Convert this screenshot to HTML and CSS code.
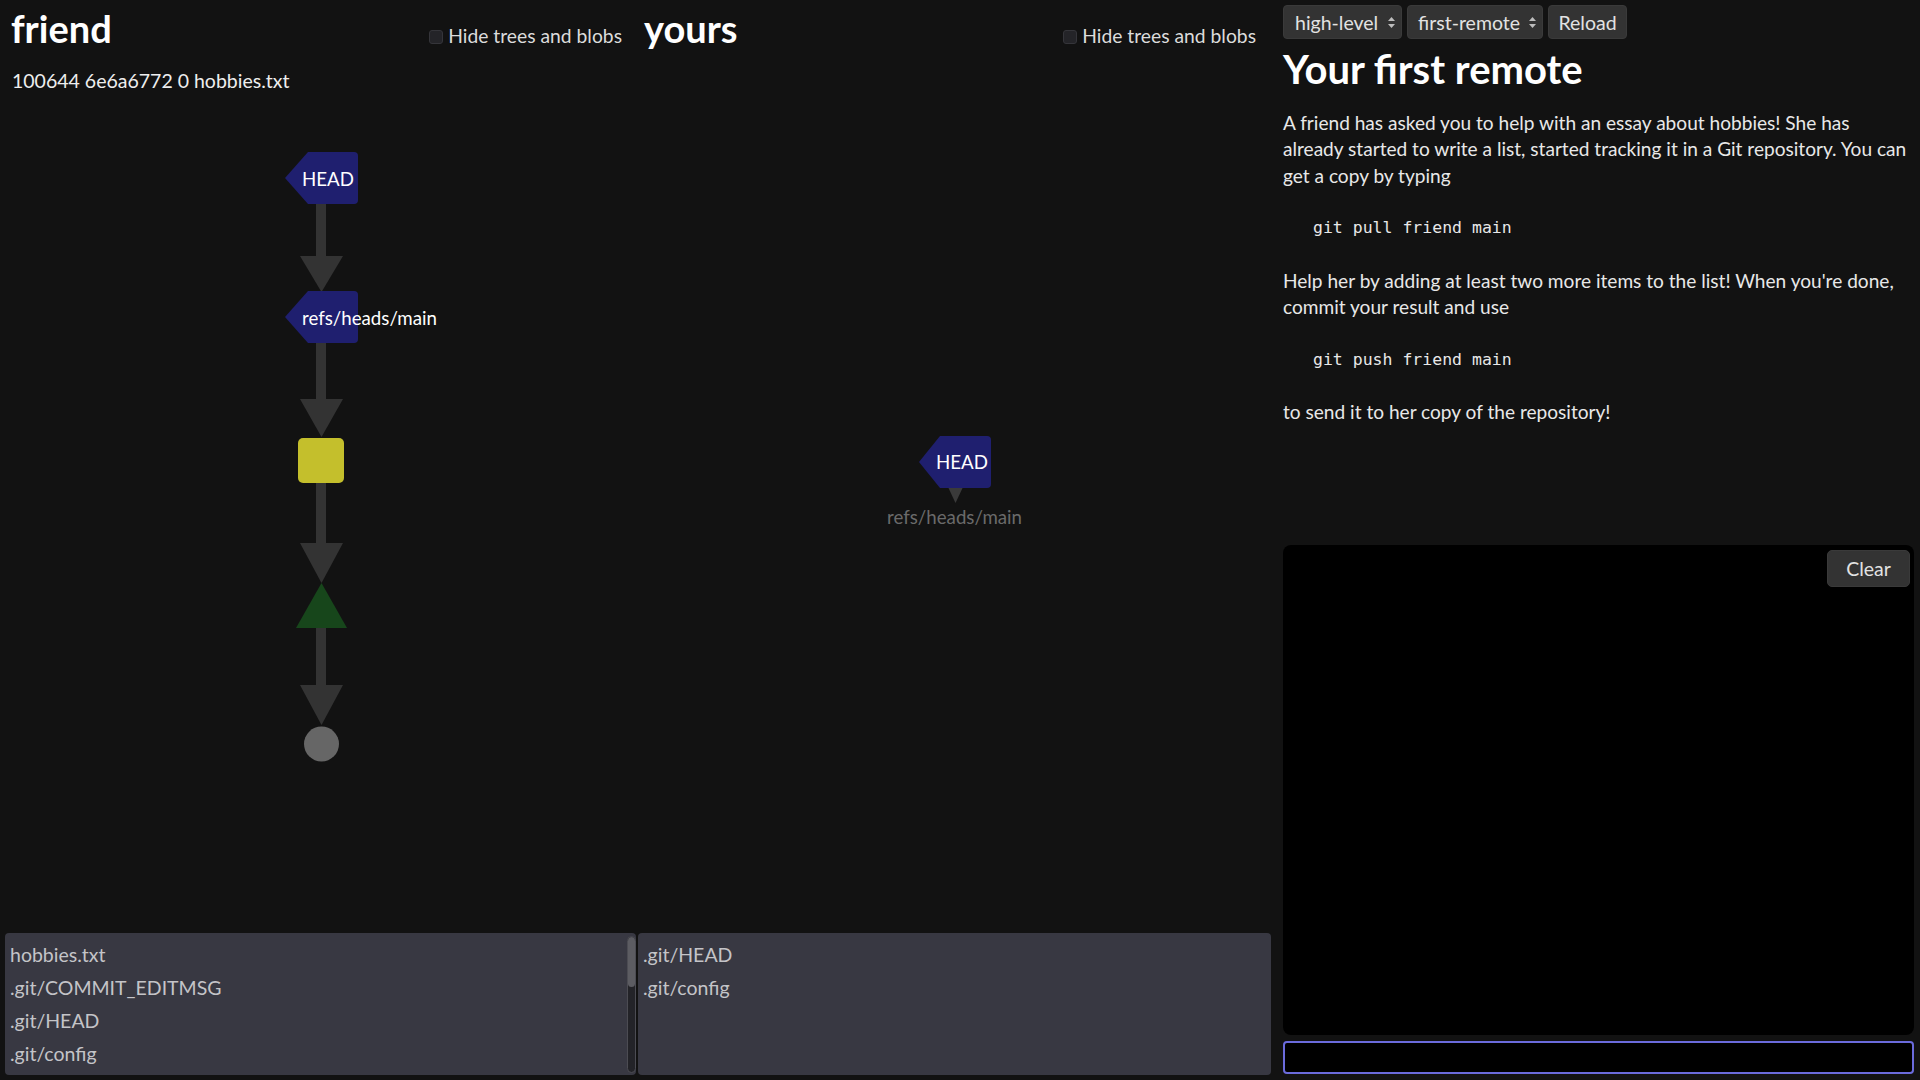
FILE: index.html
```html
<!DOCTYPE html>
<html lang="en">
<head>
<meta charset="utf-8">
<title>Your first remote</title>
<link rel="stylesheet" href="styles.css">
</head>
<body>
<div class="app">
  <section class="repo repo-friend">
    <header class="repo-head">
      <h1>friend</h1>
      <label class="toggle"><input type="checkbox">Hide trees and blobs</label>
    </header>
    <div class="info">100644 6e6a6772 0 hobbies.txt</div>
    <div class="graph">
      <svg width="636" height="834" viewBox="0 94 636 834">
        <g class="edges">
          <rect x="316" y="178" width="10" height="80"/>
          <polygon points="300,256 343,256 321.5,292"/>
          <rect x="316" y="317" width="10" height="84"/>
          <polygon points="300,399 343,399 321.5,437"/>
          <rect x="316" y="460" width="10" height="85"/>
          <polygon points="300,543 343,543 321.5,583"/>
          <rect x="316" y="605" width="10" height="82"/>
          <polygon points="300,685 343,685 321.5,725"/>
        </g>
        <path class="ref" d="M285,178 L308,152 H354 Q358,152 358,156 V200 Q358,204 354,204 H308 Z"/>
        <text class="label" x="302" y="186">HEAD</text>
        <path class="ref" d="M285,317 L308,291 H354 Q358,291 358,295 V339 Q358,343 354,343 H308 Z"/>
        <text class="label" x="302" y="325">refs/heads/main</text>
        <rect class="commit" x="298" y="438" width="46" height="45" rx="5"/>
        <polygon class="tree" points="321.5,583 296,628 347,628"/>
        <circle class="blob" cx="321.5" cy="744" r="17.5"/>
      </svg>
    </div>
    <div class="files files-friend">
      <ul class="file-list">
        <li>hobbies.txt</li>
        <li>.git/COMMIT_EDITMSG</li>
        <li>.git/HEAD</li>
        <li>.git/config</li>
      </ul>
      <div class="scrollbar"><div class="thumb"></div></div>
    </div>
  </section>

  <section class="repo repo-yours">
    <header class="repo-head">
      <h1>yours</h1>
      <label class="toggle"><input type="checkbox">Hide trees and blobs</label>
    </header>
    <div class="graph">
      <svg width="640" height="877" viewBox="0 51 640 877">
        <polygon class="edge-small" points="312,487 327,487 319.5,503"/>
        <path class="ref" d="M283,462 L304,436 H351 Q355,436 355,440 V484 Q355,488 351,488 H304 Z"/>
        <text class="label" x="300" y="469">HEAD</text>
        <text class="label label-dim" x="318.5" y="524" text-anchor="middle">refs/heads/main</text>
      </svg>
    </div>
    <div class="files files-yours">
      <ul class="file-list">
        <li>.git/HEAD</li>
        <li>.git/config</li>
      </ul>
    </div>
  </section>

  <aside class="level">
    <div class="controls">
      <div class="btn select select-chapter"><span>high-level</span>
        <svg width="7" height="11" viewBox="0 0 7 11"><polygon points="0,4 3.5,0 7,4"/><polygon points="0,7 3.5,11 7,7"/></svg>
      </div>
      <div class="btn select select-level"><span>first-remote</span>
        <svg width="7" height="11" viewBox="0 0 7 11"><polygon points="0,4 3.5,0 7,4"/><polygon points="0,7 3.5,11 7,7"/></svg>
      </div>
      <button class="btn reload">Reload</button>
    </div>
    <h2>Your first remote</h2>
    <div class="desc">
      <p>A friend has asked you to help with an essay about hobbies! She has already started to write a list, started tracking it in a Git repository. You can get a copy by typing</p>
      <pre>git pull friend main</pre>
      <p>Help her by adding at least two more items to the list! When you're done, commit your result and use</p>
      <pre>git push friend main</pre>
      <p>to send it to her copy of the repository!</p>
    </div>
    <div class="terminal">
      <button class="btn clear">Clear</button>
    </div>
    <input class="cmd" type="text" aria-label="command">
  </aside>
</div>
</body>
</html>
```

FILE: styles.css
```css
html, body {
  margin: 0;
  height: 100%;
}

body {
  background: #121212;
  color: #e6e6e6;
  font-family: Lato, "Noto Sans", sans-serif;
  overflow: hidden;
}

.app {
  display: grid;
  grid-template-columns: 636px 640px 1fr;
  height: 1080px;
}

.repo {
  display: flex;
  flex-direction: column;
  min-height: 0;
}

.repo-head {
  display: flex;
  align-items: baseline;
  justify-content: space-between;
  padding: 5px 14px 0 11px;
}

.repo-yours .repo-head {
  padding: 5px 20px 0 8px;
}

h1 {
  margin: 0;
  font-size: 38px;
  line-height: 46px;
  font-weight: 700;
  color: #fff;
}

.toggle {
  font-size: 19.3px;
  color: #dcdcdc;
}

.toggle input {
  appearance: none;
  -webkit-appearance: none;
  width: 14px;
  height: 14px;
  margin: 0 5px 0 0;
  border: 1px solid #35353a;
  border-radius: 3px;
  background: #242428;
  vertical-align: -1px;
}

.info {
  margin-top: 17px;
  padding-left: 12px;
  font-size: 19.5px;
  line-height: 26px;
  color: #eee;
}

.graph {
  flex: 1;
  min-height: 0;
  overflow: hidden;
}

.graph svg {
  display: block;
  overflow: visible;
}

.edges rect,
.edges polygon {
  fill: #333;
}

.edge-small {
  fill: #3a3a3a;
}

.ref {
  fill: #1f1f6f;
}

.label {
  font-family: Lato, "Noto Sans", sans-serif;
  font-size: 18.7px;
  fill: #fff;
}

.label-dim {
  fill: #6a6a6a;
}

.commit {
  fill: #c4bf2c;
}

.tree {
  fill: #17461b;
}

.blob {
  fill: #666;
}

.files {
  flex: none;
  display: flex;
  box-sizing: border-box;
  height: 142px;
  margin: 5px 0 5px 5px;
  padding: 5px 0 5px 5px;
  background: #383842;
  border-radius: 4px;
}

.files-yours {
  margin: 5px 5px 5px 2px;
}

.file-list {
  flex: 1;
  margin: 0;
  padding: 0;
  list-style: none;
  overflow: hidden;
  font-size: 19.5px;
  line-height: 33px;
  color: #c4c4c8;
}

.scrollbar {
  flex: none;
  box-sizing: border-box;
  width: 9px;
  margin: -2px 0 -3px;
  background: #232328;
  border: 1px solid #4c4c53;
  border-radius: 5px;
  overflow: hidden;
}

.thumb {
  height: 50px;
  background: #5c5c62;
  border-radius: 4px;
}

.level {
  display: flex;
  flex-direction: column;
  min-height: 0;
  padding: 5px 6px 6px 7px;
}

.controls {
  display: flex;
  gap: 5px;
  height: 34px;
}

.btn {
  box-sizing: border-box;
  height: 34px;
  display: flex;
  align-items: center;
  background: #333;
  color: #e2e2e2;
  border: 1px solid #3a3a3a;
  border-radius: 4px;
  font-family: Lato, "Noto Sans", sans-serif;
  font-size: 19.5px;
  padding: 0 10px;
}

.select {
  justify-content: space-between;
  padding: 0 6px 0 11px;
}

.select svg {
  fill: #bdbdbd;
}

.select-chapter {
  width: 119px;
}

.select-level {
  width: 136px;
  padding-left: 10px;
}

.reload {
  width: 79px;
  justify-content: center;
}

h2 {
  margin: 6px 0 0;
  font-size: 40px;
  line-height: 48px;
  font-weight: 700;
  color: #fff;
}

.desc {
  flex: 1;
  min-height: 0;
  margin-top: 17px;
  font-size: 19.1px;
  line-height: 26.3px;
  color: #e8e8e8;
}

.desc p {
  margin: 0 0 26.3px;
}

.desc pre {
  margin: 0 0 26.3px;
  padding-left: 30px;
  font-family: "DejaVu Sans Mono", "Liberation Mono", monospace;
  font-size: 16.5px;
  line-height: 26.3px;
  color: #e8e8e8;
}

.terminal {
  flex: none;
  position: relative;
  height: 490px;
  margin-bottom: 6px;
  background: #000;
  border-radius: 8px;
}

.clear {
  position: absolute;
  top: 5px;
  right: 4px;
  width: 83px;
  height: 37px;
  justify-content: center;
  border-radius: 5px;
}

.cmd {
  flex: none;
  box-sizing: border-box;
  height: 33px;
  margin: 0;
  background: #000;
  color: #fff;
  border: 2px solid #6b6bdc;
  border-radius: 4px;
  outline: none;
  font-family: Lato, "Noto Sans", sans-serif;
  font-size: 19.5px;
}
```
